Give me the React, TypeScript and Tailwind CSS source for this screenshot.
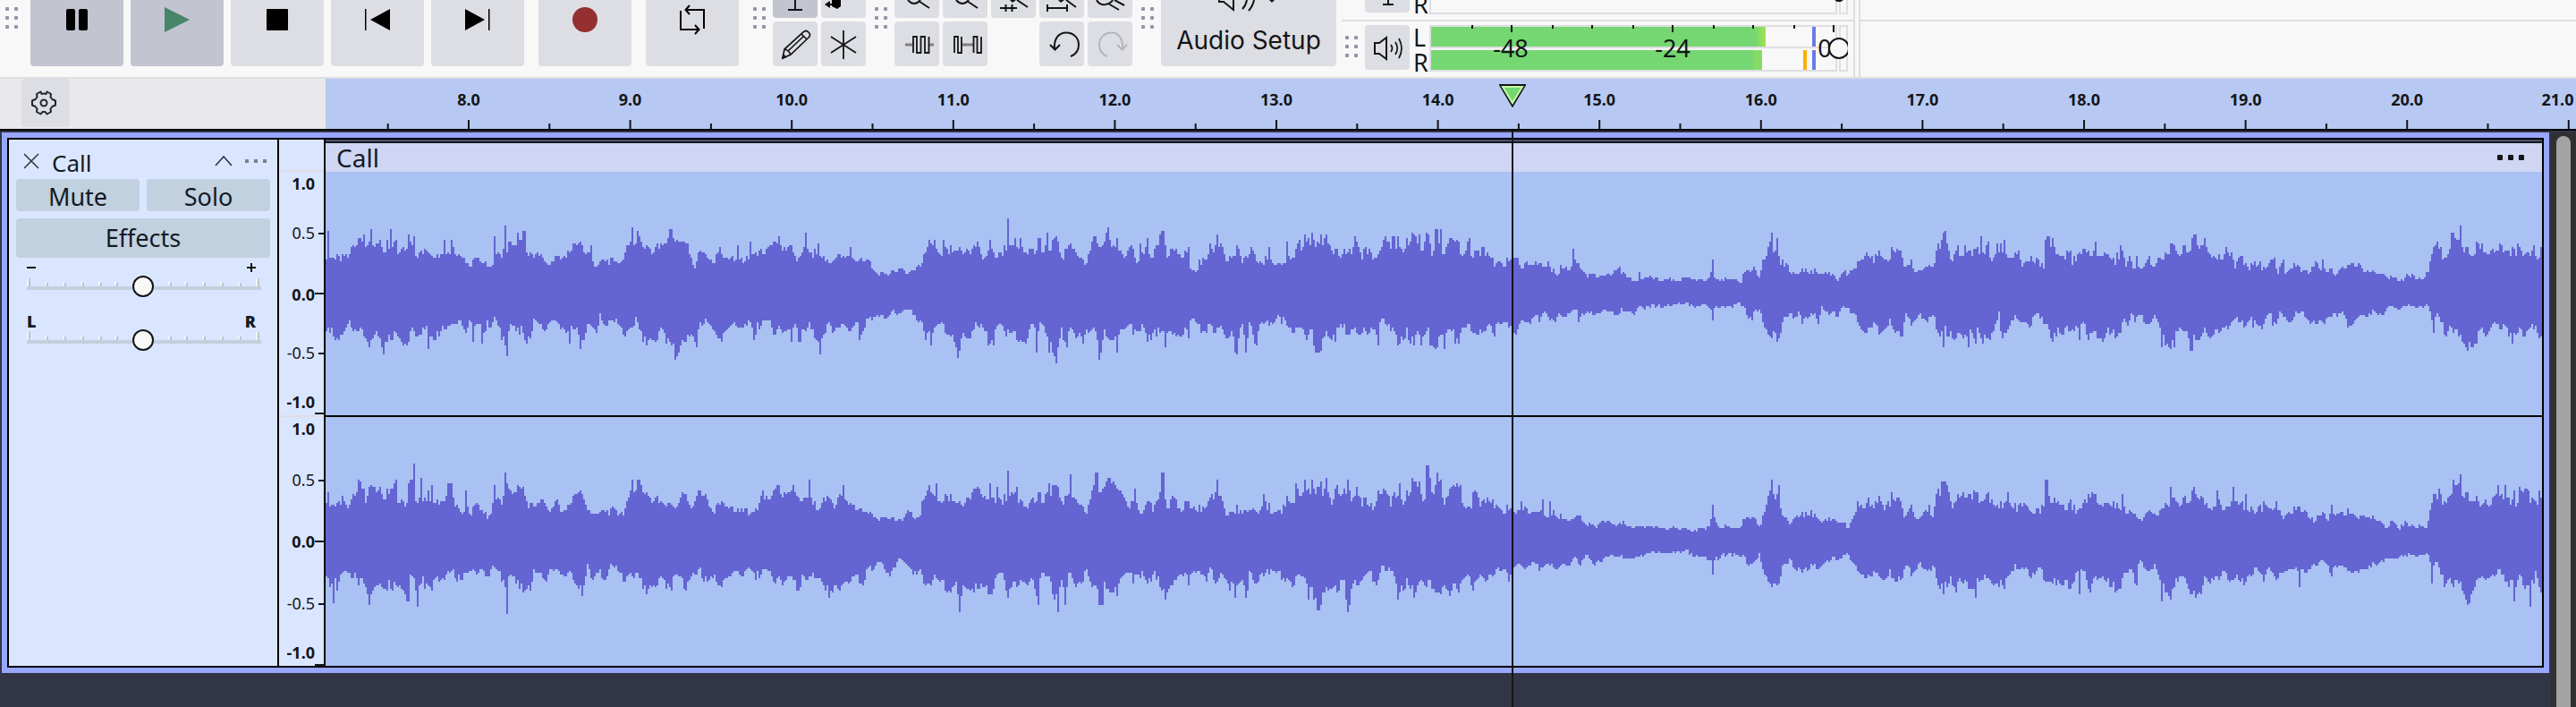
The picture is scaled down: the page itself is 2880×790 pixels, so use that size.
import type { ReactNode } from "react";

/* ------------------------------------------------------------------ */
/* Waveform data                                                       */
/* ------------------------------------------------------------------ */

// One stretch of an outline: knots are "x,y" pairs joined by lines, spikes are
// "x,y" or "x,y,width" columns that stand out from them. Both are in the
// section's own units and are scaled to canvas pixels by x0/sx and y0.
type Section = {
  from: number;
  to: number;
  x0: number;
  sx: number;
  y0: number;
  top: string;
  topSpikes: string;
  bottom: string;
  bottomSpikes: string;
};

const LEFT: Section[] = [
  {
    from: 364, to: 1200, x0: 360, sx: 1.8233, y0: 150,
    top: "7,415 20,395 45,420 55,405 70,365 90,360 100,340 110,370 130,375 150,370 155,390 180,370 195,400 212,385 225,400 245,405 252,380 262,400 270,380 285,415 295,435 305,440 315,425 335,440 348,435 352,385 368,400 375,370 390,380 398,370 410,350 418,390 428,410 438,385 450,420 465,430 480,420 488,400 500,390 515,375 530,370 540,400 550,400 555,440 575,430 590,420 610,440 620,355 640,350 655,360 670,400 685,365 700,350 712,345 722,370 740,380 750,400 760,460 768,405 778,400 785,425 800,425 812,405 830,425 848,400 862,435 872,400 890,395 905,385 920,370 935,360 945,390 960,390 968,430 985,390 995,400 1010,385 1022,400 1035,440 1045,415 1060,410 1075,395 1085,415 1100,410 1115,415 1120,450 1132,465 1150,465 1165,455 1185,455 1193,478 1205,450 1222,445 1227,395 1240,370 1252,385 1260,405 1270,380 1285,390 1305,375 1320,405 1335,380 1350,420 1360,370 1375,400 1390,388 1405,385 1415,365 1425,385 1435,385 1450,405 1460,370 1480,375 1497,365 1508,410 1525,375 1540,405 1555,415 1568,430",
    topSpikes: "12,325 100,318 140,318 178,336 187,342 251,354 266,354 352,342 374,306 399,330 412,324,8 528,360 548,372 632,312 643,324 711,318,8 745,366 811,378 848,372 873,360 930,354 986,330 1013,366 1076,378 1237,354 1249,354 1267,354 1336,360 1361,354 1398,282 1414,348 1425,348 1478,330 1497,342 1525,366",
    bottom: "7,665 20,665 35,690 45,675 58,630 70,670 80,640 95,690 105,680 112,660 124,735 135,680 145,675 155,670 165,695 178,710 182,650 190,665 205,670 212,640 218,680 230,675 240,680 248,640 262,640 285,635 292,665 303,610 308,660 318,630 330,680 337,620 343,660 352,620 358,650 370,690 378,700 385,650 400,655 410,655 416,690 425,675 433,620 445,650 455,650 470,625 485,650 492,640 503,680 510,655 520,655 530,715 540,650 550,640 560,670 567,610 580,640 592,620 605,640 620,665 630,650 640,620 648,660 658,700 670,685 685,675 692,660 700,690 710,705 722,755 730,735 738,680 748,680 757,695 765,700 770,640 780,625 790,645 805,660 815,690 825,665 840,625 850,655 865,640 872,630 880,665 890,640 910,625 920,660 935,655 950,655 965,650 973,685 985,650 993,630 1000,670 1012,690 1022,665 1035,640 1045,670 1052,650 1065,650 1080,665 1090,640 1100,660 1110,620 1125,625 1140,610 1155,615 1165,595 1175,605 1187,590 1200,595 1215,620 1226,640 1230,680 1245,660 1260,640 1275,660 1285,665 1297,740 1305,665 1320,680 1330,640 1345,650 1360,690 1370,660 1385,650 1395,665 1412,670 1425,690 1435,715 1445,650 1455,660 1463,640 1475,660 1485,700 1500,740 1508,660 1517,705 1525,650 1540,680 1555,690 1560,650 1568,650",
    bottomSpikes: "97,714 124,738 217,720 308,696 328,702 378,744 416,696 505,702 528,720 722,756 765,714 881,690 957,696 1015,738 1096,690 1242,708 1298,750 1370,708 1458,732 1483,732 1498,768 1517,714 1555,708",
  },
  {
    from: 1200, to: 2040, x0: 1200, sx: 1.8233, y0: 150,
    top: "0,390 10,415 25,430 35,395 45,350 55,380 62,370 70,330 78,380 90,385 105,430 112,395 122,385 130,430 138,380 145,400 150,360 157,430 165,385 172,365 183,330 190,400 205,395 215,410 222,400 235,410 240,450 248,455 258,430 270,420 280,390 292,370 300,375 312,415 325,405 335,385 345,430 355,400 365,385 375,430 385,440 400,395 410,440 425,430 430,450 437,380 442,400 452,400 460,360 470,370 480,350 490,345 500,370 512,345 525,370 532,400 545,410 558,390 570,390 576,370 585,410 600,390 610,420 620,410 630,370 642,365 655,360 668,400 680,360 690,350 700,365 712,380 722,340 730,400 740,350 750,400 765,360 780,370 792,410 805,370 820,410 835,395 850,405 860,435 870,425 880,430 893,415 905,420 912,445 925,435 940,435 955,435 970,430 977,460 988,465 995,445 1010,450 1018,440 1028,440 1040,450 1050,475 1065,475 1080,465 1095,465 1110,460 1125,470 1140,485 1155,485 1170,482 1185,480 1200,495 1215,488 1235,488 1255,485 1275,490 1295,492 1300,470 1312,480 1325,488 1345,485 1362,490 1370,458 1390,455 1400,480 1407,420 1415,380 1423,350 1428,410 1436,370 1442,430 1455,445 1462,460 1475,465 1490,452 1505,460 1520,465 1535,470 1550,468 1560,480 1568,465",
    topSpikes: "47,342 70,312 89,348 137,366 150,348 183,324 235,378 280,366 293,336 336,384 364,378 401,390 437,360 460,354 472,336 486,330 516,342 576,342 603,384 636,342 663,342 690,342 706,336 722,330 741,318,8 750,318 766,354 787,360 808,348 837,378 944,426 968,426 1019,384 1023,420 1115,444 1153,462 1305,420 1389,444 1424,330 1436,348 1446,420",
    bottom: "0,660 7,690 15,655 23,700 30,650 40,645 45,670 52,740 58,730 64,665 75,675 90,680 105,660 115,640 122,660 130,675 138,640 150,665 160,680 170,665 180,650 188,660 195,650 210,665 220,680 228,660 235,670 240,625 255,630 262,660 278,650 288,670 295,640 305,670 312,690 320,660 328,700 334,730 340,650 345,640 352,730 358,625 365,650 372,705 378,650 390,630 405,640 415,615 425,625 430,600 436,655 450,655 465,655 475,700 485,650 492,710 500,730 510,680 517,660 527,680 535,660 540,630 548,650 560,660 572,660 585,680 592,660 602,685 612,640 620,680 627,620 640,630 652,665 662,700 670,680 680,660 690,700 700,655 710,690 717,670 722,655 730,695 741,710 748,650 756,670 765,650 775,670 785,690 792,655 805,640 820,660 835,665 845,635 857,670 865,640 880,635 893,640 903,655 912,620 925,620 935,635 945,610 950,625 960,595 970,620 982,620 990,600 1000,620 1008,605 1020,590 1030,600 1045,610 1055,590 1068,605 1080,592 1092,590 1105,605 1118,590 1130,590 1145,595 1155,575 1165,585 1180,575 1200,578 1215,575 1235,570 1255,570 1270,578 1285,570 1297,575 1303,610 1310,580 1325,578 1340,580 1357,560 1368,590 1382,615 1392,590 1402,600 1407,635 1420,660 1430,650 1436,680 1445,640 1452,610 1465,610 1480,600 1490,630 1500,600 1512,610 1520,620 1526,575 1535,600 1550,595 1568,600",
    bottomSpikes: "53,756 58,732 89,732 151,696 188,714 334,738 352,732 372,708 497,732,10 534,696 621,708 662,708 694,708 709,708 728,708 741,714 756,720 779,702 786,702 858,678 902,666 983,630 1030,630 1143,606 1303,624 1384,624 1423,684 1435,696 1487,636 1519,636",
  },
  {
    from: 2040, to: 2842, x0: 2040, sx: 1.8667, y0: 150,
    top: "0,465 10,465 20,475 28,490 35,465 45,465 55,455 65,450 70,425 80,430 85,400 95,410 103,430 112,395 125,420 132,440 137,395 150,390 160,410 165,450 175,445 190,455 205,450 215,445 228,455 234,400 242,355 252,350 257,390 265,420 275,385 285,410 293,395 305,395 318,395 327,370 335,395 343,380 348,440 360,385 372,375 382,410 395,412 405,405 410,445 420,430 435,415 445,435 458,440 462,355 472,355 485,400 495,410 507,400 518,430 525,410 537,395 550,400 565,400 580,400 595,420 605,430 612,410 620,395 628,440 635,400 645,455 655,440 665,450 675,420 685,450 692,445 697,400 710,405 722,380 735,390 748,380 762,378 775,360 785,385 795,385 805,395 818,415 828,425 838,385 850,400 857,450 865,405 877,425 888,450 897,430 910,440 920,455 932,425 940,430 947,465 955,430 962,470 972,445 985,445 995,460 1010,460 1022,440 1035,440 1045,460 1060,460 1068,475 1080,455 1095,445 1105,440 1118,445 1125,470 1140,460 1155,462 1168,465 1180,480 1195,488 1210,490 1218,470 1235,478 1250,493 1260,455 1267,400 1280,375 1290,400 1302,400 1310,335 1320,345 1328,350 1335,380 1345,390 1355,400 1362,375 1370,400 1378,400 1390,395 1400,385 1410,370 1425,390 1440,395 1450,380 1460,410 1475,400 1483,420 1495,390",
    topSpikes: "87,396 114,390 142,390 181,420 252,324 277,372 292,372 327,342 341,372 361,366 375,354 402,402 433,408 465,354,10 476,348 507,390 512,390 539,390 548,396 565,360 612,396 618,372 650,408 676,408 723,366 773,336,6 793,348 838,378 897,426 908,426 940,414 956,420 1023,426 1040,420 1102,432 1115,432 1270,396 1280,360 1310,330 1327,306 1361,366 1373,366 1411,366 1448,366 1480,372 1495,378",
    bottom: "0,600 12,595 28,605 38,580 50,590 62,600 68,615 78,650 95,655 105,640 115,670 125,650 137,625 150,665 162,665 170,605 180,630 195,610 205,610 215,625 228,600 233,640 242,670 250,650 258,665 270,685 285,660 297,690 305,650 315,680 322,650 330,680 343,685 350,650 362,620 364,590 368,680 380,665 390,630 400,610 410,630 425,650 435,625 443,605 455,630 466,635 475,690 485,655 498,665 510,645 520,650 530,670 540,635 550,670 565,680 580,685 590,650 605,670 618,660 628,620 635,640 640,600 650,630 660,610 675,635 690,605 700,640 710,690 722,700 730,700 738,645 748,665 756,660 765,720 772,670 783,680 792,650 810,675 820,655 832,665 845,640 855,625 870,630 885,645 892,600 900,640 912,645 920,625 930,600 940,635 950,600 965,620 975,625 985,600 1000,595 1015,630 1030,625 1045,635 1055,610 1070,610 1082,600 1093,640 1105,620 1120,600 1135,605 1145,595 1165,605 1180,580 1200,582 1215,572 1235,580 1255,572 1265,595 1270,660 1278,600 1290,640 1297,675 1307,650 1320,665 1330,680 1343,705 1358,695 1370,655 1380,670 1390,650 1400,620 1410,665 1420,640 1428,660 1437,690 1445,650 1455,670 1465,660 1480,640 1490,670 1495,700",
    bottomSpikes: "115,672 248,714 300,714 316,702 345,690 370,684 476,696 532,690 580,696 704,714 730,714 765,726,7 810,678 893,648 912,654 937,642 1093,642 1270,666 1296,678 1344,708 1359,702 1437,702",
  },
];

const RIGHT: Section[] = [
  {
    from: 364, to: 600, x0: 300, sx: 3, y0: 430,
    top: "192,385 205,395 215,385 235,400 245,380 262,415 275,400 290,370 302,335 312,345 327,380 335,350 340,320 357,320 360,365 378,360 400,365 415,340 430,345 435,385 450,385 460,400 468,375 472,335 485,330 495,370 508,385 515,370 530,385 545,380 560,380 575,390 588,390 592,360 605,330 617,340 622,395 635,380 640,420 655,435 668,410 680,430 700,410 720,430 735,445 748,420 755,370 765,365 785,385 795,360 805,360 820,375 838,350 862,350 870,400 885,405 900,390",
    topSpikes: "200,360 303,324 489,264 513,312 549,336 537,354 608,330,12 662,354 760,336 795,294 801,330 836,336",
    bottom: "192,640 205,675 219,690 225,640 232,670 245,640 260,640 290,635 302,675 310,640 325,655 337,700 350,690 360,670 375,680 392,700 405,665 425,680 440,665 455,680 465,720 475,640 490,655 500,690 507,670 520,655 525,678 550,680 557,630 568,660 582,660 597,620 610,630 622,620 630,665 640,645 647,680 655,630 680,620 695,635 715,630 740,640 752,610 765,630 780,640 790,670 805,660 820,650 840,665 855,685 868,670 880,680 890,625 900,645",
    bottomSpikes: "219,732 231,690 339,738 468,726 501,744 549,690 801,768 855,696",
  },
  {
    from: 600, to: 1720, x0: 590, sx: 1.3876, y0: 510,
    top: "0,165 10,150 25,150 35,180 45,160 55,175 65,150 80,125 88,130 93,180 105,185 112,195 125,185 135,175 140,200 148,190 155,125 163,95 175,95 183,110 188,150 200,135 210,145 222,165 232,180 240,140 248,145 255,180 265,130 275,140 282,170 290,185 303,155 312,180 325,170 337,185 350,185 358,165 365,120 375,150 385,110 395,120 405,135 415,130 425,160 437,140 442,140 450,175 458,135 470,140 476,170 488,125 498,150 510,165 520,170 530,190 540,205 550,205 560,195 570,205 582,220 590,185 600,200 608,215 612,150 620,115 630,130 638,155 648,130 660,145 672,150 685,150 695,115 705,130 718,130 725,135 735,140 745,150 752,130 765,150 780,165 790,140 800,135 810,110 822,120 828,150 842,130 855,165 868,180 877,120 890,115 903,85 915,115 925,150 933,185 943,130 952,190 962,150 970,170 978,140 985,120 993,170 1003,140 1010,185 1022,160 1035,165 1050,180 1060,130 1070,115 1080,170 1085,190 1100,175 1110,190 1120,170 1135,190 1145,160 1155,185 1172,180 1180,130 1188,140 1197,105 1207,115 1217,95 1230,110 1240,100 1247,150 1255,120 1265,130 1273,110 1280,150 1285,130 1290,155 1305,155 1312,180 1320,130 1330,120 1340,150 1350,120 1357,160 1365,120 1375,105 1385,100 1391,155 1397,80 1405,110 1413,90 1422,145 1435,110 1446,120 1450,155 1460,180 1468,130 1480,165 1490,140 1503,165 1515,180 1523,170 1533,195 1542,165 1550,185 1568,182",
    topSpikes: "82,114 170,78 241,120 269,120 366,114 388,96 412,96 438,78 489,96 623,96 634,90 694,108 718,90 729,102 745,48 759,102 810,90 821,96 842,60 882,54,4 902,72,8 943,108 985,54,4 1069,78 1143,126 1193,90 1205,78 1217,78 1240,72 1272,78 1285,102 1320,114 1353,90 1371,72 1384,84 1396,30,5 1410,54 1416,78 1435,96 1446,96 1466,120 1542,150",
    bottom: "0,440 10,395 20,405 30,410 35,378 45,390 55,390 68,405 75,435 85,460 93,370 100,415 110,385 122,410 130,355 140,385 150,405 160,395 172,400 182,455 192,430 205,415 220,445 232,400 245,435 258,400 268,385 280,430 290,395 300,435 312,410 322,375 333,410 340,375 355,400 370,380 380,405 395,420 408,400 418,445 428,400 440,405 455,405 468,465 475,440 485,450 495,430 508,410 520,415 528,375 537,390 545,355 553,370 562,410 575,340 583,350 592,385 600,395 608,370 613,410 622,440 630,400 640,430 655,440 665,420 670,500 676,430 690,440 705,448 720,440 727,410 738,400 745,450 755,430 765,415 775,440 783,425 790,480 797,400 808,400 815,450 822,490 830,410 835,480 840,385 850,440 860,405 870,390 878,440 888,490 896,430 908,445 920,425 930,390 940,410 952,395 962,415 975,400 983,435 992,440 1003,410 1013,390 1025,415 1040,380 1055,410 1060,380 1065,425 1075,400 1090,430 1100,450 1107,410 1115,465 1120,380 1130,420 1145,390 1158,385 1170,400 1185,430 1195,400 1205,420 1215,450 1226,500 1235,450 1245,430 1255,445 1265,410 1273,500 1280,430 1292,430 1305,390 1318,435 1325,370 1340,380 1350,460 1357,430 1367,420 1375,460 1385,420 1395,435 1405,430 1412,455 1420,430 1433,455 1445,440 1455,400 1467,420 1475,400 1490,410 1505,385 1515,380 1523,410 1527,370 1535,350 1545,370 1555,360 1568,370",
    bottomSpikes: "84,468 223,450 418,450 468,474 670,522 745,474 791,498 822,522 835,498 889,498,7 915,468 990,480 1097,474 1115,474 1227,516,5 1211,480 1273,522 1349,480 1374,474 1432,468 1467,450",
  },
  {
    from: 1720, to: 2842, x0: 1720, sx: 1.3876, y0: 510,
    top: "0,185 8,190 18,190 28,195 40,210 55,210 65,205 75,225 88,238 98,210 112,215 120,240 130,225 145,235 155,225 165,240 180,235 200,248 212,235 225,245 240,250 255,242 265,240 272,190 280,235 295,235 310,238 320,210 335,205 345,240 352,160 360,110 367,150 373,130 378,190 388,225 400,200 415,190 423,190 430,205 440,220 450,205 462,215 475,225 480,240 487,210 492,190 497,165 505,180 510,150 520,175 530,140 538,185 548,140 560,150 568,210 578,180 588,210 600,180 612,210 618,140 625,100 635,115 643,165 652,135 662,140 675,128 690,135 700,150 708,170 718,160 728,145 735,170 745,175 755,160 765,185 778,185 787,140 795,140 805,150 815,165 827,170 837,180 845,165 855,130 865,135 875,165 890,170 900,155 910,180 920,185 930,205 938,210 945,185 960,205 966,160 975,160 985,150 997,145 1010,135 1020,125 1030,150 1040,170 1055,160 1065,180 1075,150 1085,150 1095,165 1105,180 1118,170 1130,170 1140,185 1148,170 1153,205 1165,185 1180,180 1195,195 1205,225 1213,185 1225,215 1232,180 1240,200 1255,195 1270,200 1283,210 1293,205 1303,210 1315,235 1325,220 1335,240 1345,225 1358,235 1370,235 1378,242 1385,160 1390,135 1400,140 1412,140 1418,90 1428,85 1435,120 1445,135 1455,145 1462,180 1470,150 1477,170 1485,115 1495,125 1507,145 1515,165 1523,115 1535,120 1540,150 1548,160 1555,120",
    topSpikes: "6,144 18,150 64,198 271,162,4 362,78 372,96 423,180 495,150 511,138 530,132 548,120 578,162 606,162 618,126 628,84,7 659,120 678,126 698,120 729,120 788,78,4 825,144 859,120 906,126 980,102 1018,102 1054,114 1078,102 1097,126 1125,150 1145,150 1232,162 1257,174 1397,108 1420,78 1431,60 1489,96 1500,96 1513,114 1522,102 1531,108 1554,114",
    bottom: "0,380 10,370 20,360 28,375 38,365 48,370 55,340 65,360 75,330 88,358 98,350 108,335 120,330 130,335 140,342 150,335 165,330 180,318 195,325 210,325 228,315 240,330 255,335 265,340 270,370 275,350 285,330 300,330 315,330 325,355 333,365 343,330 350,390 360,410 372,420 378,370 390,350 400,370 412,390 422,360 432,375 445,355 458,340 470,345 478,325 487,350 500,385 515,405 525,400 535,410 545,390 555,415 565,395 572,365 580,390 590,360 600,370 608,390 613,360 620,420 628,440 638,410 648,440 655,405 668,440 678,430 688,400 700,410 712,425 720,430 730,400 740,370 755,385 770,410 778,370 785,415 795,415 808,420 825,430 835,400 848,390 856,440 868,410 878,400 885,420 893,440 905,435 912,380 920,380 926,420 933,350 945,380 957,365 966,420 975,450 985,455 993,405 1003,410 1010,455 1020,455 1028,440 1035,400 1048,415 1065,395 1075,420 1090,415 1100,420 1113,370 1125,415 1133,380 1140,405 1155,395 1165,370 1180,385 1190,380 1205,360 1218,350 1230,390 1240,370 1255,375 1270,380 1285,370 1300,360 1315,345 1325,350 1335,332 1350,332 1365,330 1375,322 1382,340 1387,390 1393,350 1405,420 1418,425 1430,420 1443,480 1450,435 1465,410 1480,400 1490,380 1500,420 1508,420 1515,440 1520,400 1530,430 1540,440 1548,390 1555,450",
    bottomSpikes: "270,396 362,438 370,432 556,420 628,462 649,456 678,474 723,444 839,462 856,456 895,444 904,444 927,432 967,486 980,480 1013,462,6 1027,462 1180,438 1232,402 1387,426 1406,432 1443,492,5 1513,486 1538,504 1555,456",
  },
];

const parse = (s: string) => s.split(" ").map((p) => p.split(",").map(Number));

function noise(n: number) {
  const v = Math.sin(n * 12.9898) * 43758.5453;
  return v - Math.floor(v) - 0.5;
}

function sampleAt(
  knots: number[][],
  spikes: number[][],
  u: number,
  half: number,
  dir: number,
  n: number,
  center: number,
) {
  let i = 0;
  while (i < knots.length - 2 && knots[i + 1][0] < u) i++;
  const [ax, ay] = knots[i];
  const [bx, by] = knots[i + 1];
  const t = Math.min(1, Math.max(0, (u - ax) / (bx - ax)));
  let y = ay + (by - ay) * t;
  y += noise(n) * Math.abs(y - center) * 0.28;
  for (const [sx, sy, w = 0] of spikes) {
    if (Math.abs(u - sx) <= Math.max(half, w / 2)) {
      y = dir < 0 ? Math.min(y, sy) : Math.max(y, sy);
    }
  }
  return y;
}

// Builds a stepped outline, two pixels per column, relative to the lane's top.
function wavePath(sections: Section[], laneTop: number, middle: number) {
  const upper: string[] = [];
  const lower: string[] = [];
  for (const s of sections) {
    const top = parse(s.top);
    const topSpikes = parse(s.topSpikes);
    const bottom = parse(s.bottom);
    const bottomSpikes = parse(s.bottomSpikes);
    const center = (middle - s.y0) * 3;
    for (let x = s.from; x < s.to; x += 2) {
      const u = (x + 1 - s.x0) * s.sx;
      const toY = (v: number) => 2 * Math.round((s.y0 + v / 3 - laneTop) / 2);
      // Neighbouring columns now and then share a level.
      const seed = noise(x * 3) > 0.1 ? x : x - (x % 4);
      const a = toY(sampleAt(top, topSpikes, u, s.sx, -1, seed, center));
      const b = toY(sampleAt(bottom, bottomSpikes, u, s.sx, 1, seed + 7777, center));
      const px = x - 364;
      upper.push(`${px},${a} ${px + 2},${a}`);
      lower.push(`${px + 2},${b} ${px},${b}`);
    }
  }
  return `M${upper.join(" L")} L${lower.slice().reverse().join(" L")} Z`;
}

const LANES = [
  { name: "Left channel", height: 272, path: wavePath(LEFT, 192, 328) },
  { name: "Right channel", height: 278, path: wavePath(RIGHT, 466, 605) },
];

/* ------------------------------------------------------------------ */
/* Small parts                                                         */
/* ------------------------------------------------------------------ */

function Grip({ className = "" }: { className?: string }) {
  return (
    <div className={`grid w-[14px] shrink-0 grid-cols-2 gap-x-[6px] gap-y-[6px] ${className}`} aria-hidden="true">
      {Array.from({ length: 6 }, (_, i) => (
        <span key={i} className="h-1 w-1 rounded-[1px] bg-[#9294a8]" />
      ))}
    </div>
  );
}

function TransportButton({ label, pressed = false, children }: { label: string; pressed?: boolean; children: ReactNode }) {
  return (
    <button
      type="button"
      aria-label={label}
      aria-pressed={pressed}
      className={`h-[74px] w-[104px] shrink-0 rounded-b ${pressed ? "bg-[#c2c4d0]" : "bg-[#dddee3]"}`}
    >
      <svg viewBox="0 0 104 74" className="block h-[74px] w-[104px]" fill="none" stroke="none">
        {children}
      </svg>
    </button>
  );
}

function TopTool({ label, pressed = false, children }: { label: string; pressed?: boolean; children: ReactNode }) {
  return (
    <button
      type="button"
      aria-label={label}
      aria-pressed={pressed}
      className={`h-5 w-[50px] shrink-0 rounded-b ${pressed ? "bg-[#c2c4d0]" : "bg-[#dddee3]"}`}
    >
      <svg viewBox="0 0 50 20" className="block h-5 w-[50px]" fill="none" stroke="#141517" strokeWidth="2">
        {children}
      </svg>
    </button>
  );
}

function Tool({ label, disabled = false, children }: { label: string; disabled?: boolean; children: ReactNode }) {
  return (
    <button
      type="button"
      aria-label={label}
      disabled={disabled}
      className="h-[50px] w-[50px] shrink-0 rounded bg-[#dddee3]"
    >
      <svg
        viewBox="0 0 50 50"
        className="block h-[50px] w-[50px]"
        fill="none"
        stroke={disabled ? "#b4b6bd" : "#141517"}
        strokeWidth="2"
      >
        {children}
      </svg>
    </button>
  );
}

/* ------------------------------------------------------------------ */
/* Toolbars                                                            */
/* ------------------------------------------------------------------ */

function Transport() {
  return (
    <div className="flex shrink-0 items-start" role="toolbar" aria-label="Transport">
      <Grip className="mt-2 mr-[14px] ml-[6px]" />
      <div className="flex gap-2">
        <TransportButton label="Pause" pressed>
          <rect x="40" y="10" width="10" height="24" rx="2" fill="#000" />
          <rect x="54" y="10" width="10" height="24" rx="2" fill="#000" />
        </TransportButton>
        <TransportButton label="Play" pressed>
          <path d="M38 8 L66 22 L38 36 Z" fill="#48866a" />
        </TransportButton>
        <TransportButton label="Stop">
          <rect x="40" y="10" width="24" height="24" rx="1" fill="#000" />
        </TransportButton>
        <TransportButton label="Skip to start">
          <rect x="38" y="10" width="1.5" height="24" fill="#000" />
          <path d="M66 10 V34 L44 22 Z" fill="#000" />
        </TransportButton>
        <TransportButton label="Skip to end">
          <rect x="64" y="10" width="1.5" height="24" fill="#000" />
          <path d="M38 10 V34 L60 22 Z" fill="#000" />
        </TransportButton>
      </div>
      <div className="ml-4 flex gap-4">
        <TransportButton label="Record">
          <circle cx="52" cy="22" r="14" fill="#943030" />
        </TransportButton>
        <TransportButton label="Loop">
          <path d="M45 11 H65 V32 M39 12 V33 H59 M49 6 L44.500 11 L49 16 M55 28 L59.500 33 L55 38" stroke="#000" strokeWidth="2" />
        </TransportButton>
      </div>
    </div>
  );
}

function EditTools() {
  return (
    <div className="ml-4 flex shrink-0 items-start" role="toolbar" aria-label="Tools">
      <Grip className="mt-2 mr-2" />
      <div className="flex flex-col gap-1">
        <div className="flex gap-1">
          <TopTool label="Selection tool" pressed>
            <path d="M25 0 V11 M17 11 H33" />
          </TopTool>
          <TopTool label="Envelope tool">
            <path d="M4 5 L10 1 V9 Z" fill="#000" stroke="none" />
            <path d="M8 5 H14" />
            <path d="M12 0 H22 V7 L18 10 L12 7 Z" fill="#000" stroke="none" />
          </TopTool>
        </div>
        <div className="flex gap-1">
          <Tool label="Draw tool">
            <path d="M11 41 L13 31 L34 12 Q37 9 40 12 Q43 15 40 18 L20 37 Z M13 31 Q18 32 20 37 M32 14 L38 20 M17 33 L35 16" strokeWidth="1.700" />
            <path d="M10 42 L11.500 36 L16 40 Z" fill="#141517" stroke="none" />
          </Tool>
          <Tool label="Multi-tool">
            <path d="M25 10 V42 M11 17 L39 35 M39 17 L11 35" strokeWidth="1.800" />
          </Tool>
        </div>
      </div>
      <Grip className="mx-2 mt-2 ml-[10px]" />
      <div className="flex flex-col gap-1">
        <div className="flex gap-1">
          <TopTool label="Zoom in">
            <path d="M15 0 Q22 8 29 0 M27 1 L39 9" />
          </TopTool>
          <TopTool label="Zoom out">
            <path d="M15 0 Q22 8 29 0 M27 1 L39 9" />
          </TopTool>
          <TopTool label="Fit selection to width">
            <path d="M29 0 L41 8 M10 9 H29 M16.500 5 V13 M23.500 5 V13" />
            <path d="M21 0 H28 L24 3 Z" fill="#141517" stroke="none" />
          </TopTool>
          <TopTool label="Fit project to width">
            <path d="M30 0 L41 8 M9 9 H31 M9 5 V13 M31 5 V13" />
            <path d="M21 0 H28 L24 3 Z" fill="#141517" stroke="none" />
          </TopTool>
          <TopTool label="Zoom toggle">
            <path d="M10 0 Q13 6 20 5 Q27 3 28 0 M23 4 L35 11 M30 0 L41 6" />
          </TopTool>
        </div>
        <div className="flex gap-1">
          <Tool label="Trim audio outside selection">
            <path d="M12 26 H20 M39 26 H44" stroke="#808080" strokeWidth="3" />
            <path d="M21 35 V17 H25 V35 H29.500 V17 H34 V35 H38.500 V17" strokeWidth="1.800" />
          </Tool>
          <Tool label="Silence audio selection">
            <path d="M22 26 H34" stroke="#808080" strokeWidth="3" />
            <path d="M13 35 V17 H17 V35 H21 V17 M34.500 35 V17 H38.500 V35 H43 V17" strokeWidth="1.800" />
          </Tool>
          <div className="w-[50px]" />
          <Tool label="Undo">
            <path d="M17 31 C16 20 21 12.500 30 12.500 C39 12.500 44 19 44 26 C44 33 40 37 35 39" />
            <path d="M12 26 L17.500 31.500 L23 26" />
          </Tool>
          <Tool label="Redo" disabled>
            <path d="M39 31 C40 20 35 12.500 27 12.500 C18 12.500 13 19 13 26 C13 33 17 37 22 39" />
            <path d="M33 26 L38.500 31.500 L44 26" />
          </Tool>
        </div>
      </div>
      <Grip className="mx-2 mt-2 ml-[10px]" />
      <button type="button" className="flex h-[74px] w-[196px] flex-col items-center rounded-b bg-[#dddee3]">
        <svg viewBox="0 0 196 27" className="block h-[27px] w-full shrink-0" fill="none" stroke="#141517" strokeWidth="2" aria-hidden="true">
          <path d="M65 0 V2 H70 L81 11 V0 M91 10 Q95 6 96 0 M98 12 Q103 6 104 0" />
          <path d="M121 0 H127 L124 3 Z" fill="#141517" stroke="none" />
        </svg>
        <span className='font-["Inter",sans-serif] text-[28px] leading-9 whitespace-nowrap text-[#141517]'>Audio Setup</span>
      </button>
    </div>
  );
}

const METER_TICKS = [47, 91, 137, 181, 227, 271, 317, 361, 407, 451];

function Meters() {
  return (
    <div className="ml-[6px] flex h-[86px] w-[572px] shrink-0 flex-col">
      <div className="flex h-[22px] items-start">
        <button type="button" aria-label="Record meter" className="ml-[26px] h-[14px] w-[50px] shrink-0 rounded-b bg-[#dddee3]">
          <svg viewBox="0 0 50 14" className="block h-[14px] w-[50px]" stroke="#141517" strokeWidth="2" fill="none">
            <path d="M26 0 V5 M20 5 H32" />
          </svg>
        </button>
        <span className="ml-1 flex h-[22px] w-[18px] items-end overflow-hidden text-[27px] leading-[34px] text-[#141517]">
          R
        </span>
        <svg viewBox="0 0 468 22" className="block h-[22px] w-[468px]" fill="none" aria-hidden="true">
          <path d="M1 0 V15 H455 V0 M459 0 V15 H467 V0" stroke="#dedee3" strokeWidth="2" />
          <path d="M453 0 H463 L460 2 H456 Z" fill="#141517" />
        </svg>
      </div>
      <div className="h-[2px] shrink-0 bg-[#dedee3]" />
      <div className="flex items-start pt-1">
        <Grip className="mt-3 mr-2 ml-1" />
        <Tool label="Playback meter">
          <path d="M11 20 V32 H16 L24 38 V14 L16 20 Z" />
          <path d="M29 22 Q32 26 29 30 M34 19 Q38.500 26 34 33 M38 15 Q44 26 38 37" strokeWidth="1.700" />
        </Tool>
        <div className="ml-1 flex w-[18px] shrink-0 flex-col text-[27px] leading-7 text-[#141517]">
          <span>L</span>
          <span>R</span>
        </div>
        <svg viewBox="0 0 468 52" className="block h-[52px] w-[468px]" role="img" aria-label="Playback level">
          <defs>
            <linearGradient id="peak" x1="0" x2="1" y1="0" y2="0">
              <stop offset="0" stopColor="#75d771" />
              <stop offset="1" stopColor="#a2e151" />
            </linearGradient>
          </defs>
          <path d="M1 1 H455 V51 H1 Z M459 1 H467 V51 H459 Z" stroke="#dedee3" strokeWidth="2" fill="#f8f8f9" />
          <rect x="2" y="24" width="452" height="2" fill="#dedee3" />
          <rect x="2" y="2" width="366" height="22" fill="#75d771" />
          <rect x="364" y="2" width="12" height="22" fill="url(#peak)" />
          <rect x="2" y="28" width="362" height="22" fill="#75d771" />
          <rect x="362" y="28" width="10" height="22" fill="#86da66" />
          <rect x="418" y="28" width="4" height="22" fill="#ffb000" />
          <rect x="428" y="2" width="4" height="22" fill="#6b7be4" />
          <rect x="428" y="28" width="4" height="22" fill="#6b7be4" />
          {METER_TICKS.map((x, i) => (
            <rect key={x} x={x} y="0" width="2" height={i === 1 || i === 5 || i === 9 ? 8 : 4} fill="#141517" />
          ))}
          <text x="91" y="36" textAnchor="middle" fontSize="27" fill="#141517">-48</text>
          <text x="272" y="36" textAnchor="middle" fontSize="27" fill="#141517">-24</text>
          <text x="442" y="36" textAnchor="middle" fontSize="27" fill="#141517">0</text>
          <circle cx="458" cy="26" r="11" fill="#f8f8f9" stroke="#141517" strokeWidth="2" />
        </svg>
      </div>
    </div>
  );
}

/* ------------------------------------------------------------------ */
/* Timeline                                                            */
/* ------------------------------------------------------------------ */

const RULER_WIDTH = 2516;
const rulerPct = (t: number) => ((159 + (t - 8) * 180.6) / RULER_WIDTH) * 100;

function Timeline() {
  const seconds = Array.from({ length: 14 }, (_, i) => 8 + i);
  return (
    <div className="flex h-14 shrink-0 bg-[#e9e9eb]">
      <div className="w-[364px] shrink-0">
        <button type="button" aria-label="Timeline options" className="ml-6 flex h-[54px] w-[54px] items-center justify-center rounded bg-[#dddee3] pr-1">
          <svg viewBox="0 0 28 28" className="h-7 w-7" fill="none" stroke="#24262b" strokeWidth="2" strokeLinejoin="round">
            <path d="M10.500 1.500 L11.500 4 Q14 3 16.500 4 L17.500 1.500 L22 4 L21.500 7.500 L23.500 10 L27 11.500 V16.500 L23.500 18 L21.500 20.500 L22 24 L17.500 26.500 L15.500 24 H12.500 L10.500 26.500 L6 24 L6.500 20.500 L4.500 18 L1 16.500 V11.500 L4.500 10 L6.500 7.500 L6 4 Z" />
            <circle cx="14" cy="14" r="3.500" />
          </svg>
        </button>
      </div>
      <svg className="h-14 min-w-0 flex-1 bg-[#b7c9f3]" role="img" aria-label="Timeline">
        {seconds.map((t) => (
          <g key={t}>
            <rect x={`${rulerPct(t - 0.5)}%`} y="50" width="2" height="6" fill="#141517" />
            <rect x={`${rulerPct(t)}%`} y="46" width="2" height="10" fill="#141517" />
            {t < 21 ? (
              <text x={`${rulerPct(t) + 0.04}%`} y="30" textAnchor="middle" fontSize="18" fontWeight="700" fill="#141517">
                {t.toFixed(1)}
              </text>
            ) : (
              <text x="99.9%" y="30" textAnchor="end" fontSize="18" fontWeight="700" fill="#141517">
                {t.toFixed(1)}
              </text>
            )}
          </g>
        ))}
      </svg>
    </div>
  );
}

/* ------------------------------------------------------------------ */
/* Track                                                               */
/* ------------------------------------------------------------------ */

const MINOR_TICKS = [20, 40, 60, 80, 98, 118, 138, 158, 176, 196, 216, 236];

function TrackSlider({ label, low, high }: { label: string; low: ReactNode; high: ReactNode }) {
  return (
    <div className="flex h-[60px] flex-col px-3">
      <div className="flex h-[18px] items-center justify-between pr-1" aria-hidden="true">
        {low}
        {high}
      </div>
      <div className="grid h-6">
        <svg viewBox="0 0 262 24" className="col-start-1 row-start-1 h-6 w-[262px]" aria-hidden="true">
          <rect x="0" y="12" width="262" height="4" fill="#c2d0dd" />
          {[0, 256].map((x) => (
            <g key={x}>
              <rect x={x} y="3" width="2" height="9" fill="#f4f4f2" />
              <rect x={x + 2} y="3" width="2" height="9" fill="#bcc5cf" />
            </g>
          ))}
          {MINOR_TICKS.map((x) => (
            <g key={x}>
              <rect x={x} y="7" width="2" height="4" fill="#f4f4f2" />
              <rect x={x + 2} y="8" width="2" height="4" fill="#bcc5cf" />
            </g>
          ))}
        </svg>
        <input
          type="range"
          aria-label={label}
          min="0"
          max="100"
          defaultValue="50"
          className="col-start-1 row-start-1 m-0 h-6 w-[260px] appearance-none bg-transparent [&::-webkit-slider-thumb]:h-6 [&::-webkit-slider-thumb]:w-6 [&::-webkit-slider-thumb]:appearance-none [&::-webkit-slider-thumb]:rounded-full [&::-webkit-slider-thumb]:border-2 [&::-webkit-slider-thumb]:border-[#141517] [&::-webkit-slider-thumb]:bg-[#f8f8f7]"
        />
      </div>
    </div>
  );
}

function TrackPanel() {
  return (
    <section className="flex w-[300px] shrink-0 flex-col bg-[#dae6ff] px-2 text-[#141a24]" aria-label="Call track controls">
      <header className="flex h-11 items-center pt-1">
        <button type="button" aria-label="Close track" className="ml-2 h-[18px] w-[18px]">
          <svg viewBox="0 0 18 18" className="block h-[18px] w-[18px]" stroke="#33363d" strokeWidth="1.600">
            <path d="M1 1 L17 17 M17 1 L1 17" />
          </svg>
        </button>
        <h2 className="ml-[14px] flex-1 pt-1 text-[26px] leading-8">Call</h2>
        <button type="button" aria-label="Collapse track" className="h-5 w-5">
          <svg viewBox="0 0 20 20" className="block h-5 w-5" fill="none" stroke="#33363d" strokeWidth="1.600">
            <path d="M1 15 L10 5 L19 15" />
          </svg>
        </button>
        <button type="button" aria-label="Track menu" className="mr-1 ml-[14px] flex w-6 justify-between">
          <span className="h-1 w-1 bg-[#7b818e]" />
          <span className="h-1 w-1 bg-[#7b818e]" />
          <span className="h-1 w-1 bg-[#7b818e]" />
        </button>
      </header>
      <div className="flex gap-2 text-[27px] leading-8">
        <button type="button" className="h-9 flex-1 rounded bg-[#c2d1df] pt-1">Mute</button>
        <button type="button" className="h-9 flex-1 rounded bg-[#c2d1df] pt-1">Solo</button>
      </div>
      <button type="button" className="mt-2 mb-[2px] h-11 rounded bg-[#c2d1df] text-[27px] leading-[44px]">Effects</button>
      <TrackSlider
        label="Volume"
        low={<span className="h-[2px] w-[10px] bg-[#141517]" />}
        high={
          <svg viewBox="0 0 10 10" className="h-[10px] w-[10px]" stroke="#141517" strokeWidth="2">
            <path d="M0 5 H10 M5 0 V10" />
          </svg>
        }
      />
      <TrackSlider
        label="Pan"
        low={<span className="text-[18px] leading-[18px] font-black">L</span>}
        high={<span className="text-[18px] leading-[18px] font-black">R</span>}
      />
    </section>
  );
}

const SCALES = [
  {
    height: 272,
    marks: [
      { text: "1.0", label: 14, tick: null },
      { text: "0.5", label: 69, tick: 69 },
      { text: "0.0", label: 138, tick: 136 },
      { text: "-0.5", label: 203, tick: 203 },
      { text: "-1.0", label: 258, tick: 270 },
    ],
  },
  {
    height: 278,
    marks: [
      { text: "1.0", label: 14, tick: null },
      { text: "0.5", label: 71, tick: 71 },
      { text: "0.0", label: 140, tick: 139 },
      { text: "-0.5", label: 209, tick: 209 },
      { text: "-1.0", label: 264, tick: 277 },
    ],
  },
];

function AmplitudeScale() {
  return (
    <div className="flex w-[50px] shrink-0 flex-col bg-[#dae6ff] pt-9">
      {SCALES.map((s, i) => (
        <div key={i} className={i === 0 ? "h-[274px]" : "h-[278px]"}>
          <svg viewBox={`0 0 50 ${s.height}`} height={s.height} className="block w-[50px] overflow-visible" role="img" aria-label="Amplitude scale">
            <rect x="0" y="-2" width="50" height="2" fill="#e0dce3" />
            {s.marks.map((m) => {
              const half = m.text.endsWith(".5");
              return (
                <g key={m.text} fill="#141517">
                  <text x="40" y={m.label + 6} textAnchor="end" fontSize="18" fontWeight={half ? 400 : 700}>
                    {m.text}
                  </text>
                  {m.tick !== null && <rect x={half ? 44 : 40} y={m.tick - 1} width={half ? 6 : 10} height="2" />}
                </g>
              );
            })}
          </svg>
        </div>
      ))}
    </div>
  );
}

function Clip() {
  return (
    <section className="flex min-w-0 flex-1 flex-col" aria-label="Call clip">
      <div className="h-[2px] bg-[#48536f]" />
      <div className="h-[2px] bg-[#16181f]" />
      <header className="flex h-8 items-center justify-between bg-[#cfd5f2] pr-5 pl-3">
        <h3 className="text-[28px] leading-8 text-[#141a24]">Call</h3>
        <button type="button" aria-label="Clip menu" className="flex gap-[6px]">
          <span className="h-[6px] w-[6px] rounded-[1px] bg-[#141517]" />
          <span className="h-[6px] w-[6px] rounded-[1px] bg-[#141517]" />
          <span className="h-[6px] w-[6px] rounded-[1px] bg-[#141517]" />
        </button>
      </header>
      {LANES.map((lane, i) => (
        <div key={lane.name} className={i === 0 ? "h-[274px] border-b-2 border-black bg-[#a9c1f3]" : "h-[278px] bg-[#a9c1f3]"}>
          <svg
            viewBox={`0 0 2478 ${lane.height}`}
            height={lane.height}
            preserveAspectRatio="none"
            shapeRendering="crispEdges"
            className="block w-full"
            role="img"
            aria-label={lane.name}
          >
            <path d={lane.path} fill="#6464d2" />
          </svg>
        </div>
      ))}
    </section>
  );
}

export default function App() {
  return (
    <main className='flex min-h-screen flex-col overflow-hidden bg-[#323546] font-["Noto_Sans","Noto_Sans_CJK_SC",sans-serif]'>
      <div className="flex h-[88px] shrink-0 items-start border-b-2 border-[#dedee3] bg-[#f8f8f8]">
        <Transport />
        <EditTools />
        <Meters />
        <div className="h-[86px] w-2 shrink-0 border-x-2 border-[#dedee3]" />
        <div className="h-6 flex-1 border-b-2 border-[#dedee3]" />
      </div>

      <div className="relative flex flex-1 flex-col">
        <Timeline />
        <div className="h-[2px] shrink-0 bg-black" />
        <div className="flex flex-1">
          <div className="flex min-w-0 flex-1 flex-col pt-[2px] pr-[2px] pl-[2px]">
            <article className="border-[6px] border-[#98a7fd]">
              <div className="flex border-2 border-black">
                <TrackPanel />
                <div className="w-[2px] shrink-0 bg-black" />
                <AmplitudeScale />
                <div className="w-[2px] shrink-0 bg-black" />
                <Clip />
              </div>
            </article>
          </div>
          <div className="mt-[2px] flex w-7 shrink-0 flex-col items-center bg-[#2f3031] pt-1">
            <div className="w-4 flex-1 rounded-t-full bg-[#a3a3a2]" />
          </div>
        </div>

        <div className="pointer-events-none absolute inset-y-0 right-0 left-[364px]">
          <div className="absolute inset-y-0 left-[52.75%] flex w-[30px] -translate-x-1/2 flex-col items-center pt-[6px]">
            <svg viewBox="0 0 30 26" className="block h-[26px] w-[30px] shrink-0" aria-hidden="true">
              <path d="M1 1 H29 L15 24.500 Z" fill="#75d771" stroke="#141517" strokeWidth="2" />
              <path d="M4 3 H26 L15 21 Z" fill="none" stroke="#c4f7a5" strokeWidth="2" />
            </svg>
            <div className="mt-[26px] w-[2px] flex-1 bg-[#141517]" />
          </div>
        </div>
      </div>
    </main>
  );
}
